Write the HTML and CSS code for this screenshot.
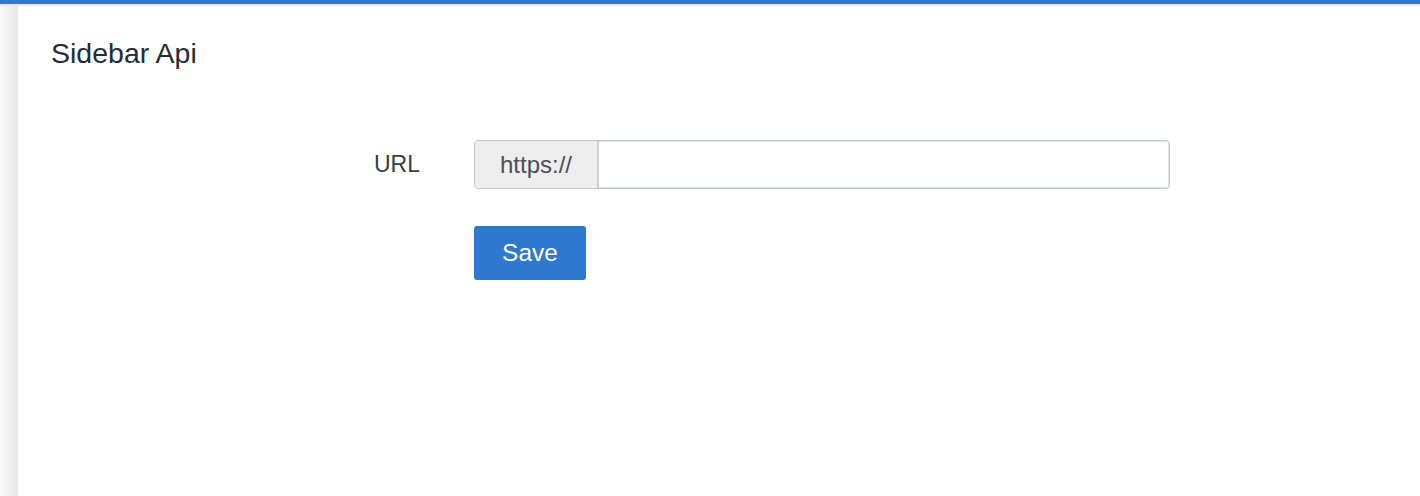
FILE: index.html
```html
<!DOCTYPE html>
<html lang="en">
<head>
    <meta charset="UTF-8">
    <meta name="viewport" content="width=device-width, initial-scale=1.0">
    <title>Sidebar Api</title>
    <link rel="stylesheet" href="styles.css">
</head>
<body>
    <div class="topbar"></div>
    <div class="layout">
        <div class="side-shadow"></div>
        <div class="panel">
            <h1 class="title">Sidebar Api</h1>
            <form class="api-form">
                <div class="form-row">
                    <label for="url" class="form-label">URL</label>
                    <div class="input-group">
                        <span class="addon">https://</span>
                        <input type="text" id="url" class="url-input">
                    </div>
                </div>
                <div class="form-row">
                    <div class="form-label"></div>
                    <button type="button" class="btn-save">Save</button>
                </div>
            </form>
        </div>
    </div>
</body>
</html>
```

FILE: styles.css
```css
body {
    font-family: "Liberation Sans", Arial, sans-serif;
    margin: 0;
    background-color: #fff;
    color: #252c34;
}
.topbar {
    height: 4px;
    background-color: #2f78d0;
    border-bottom: 2px solid #e7e8ea;
}
.layout {
    display: flex;
    height: 490px;
}
.side-shadow {
    width: 18px;
    background: linear-gradient(to right, #fbfbfb, #e6e6e6);
}
.panel {
    flex: 1;
    padding: 31px 33px;
    background: #fff;
}
.title {
    margin: 0;
    font-size: 28.5px;
    font-weight: normal;
    line-height: 32px;
    color: #252c34;
}
.api-form {
    margin-top: 71px;
}
.form-row {
    display: flex;
    align-items: center;
    margin-bottom: 37px;
}
.form-label {
    width: 423px;
    flex: none;
    box-sizing: border-box;
    padding-right: 54px;
    text-align: right;
    font-size: 23px;
    color: #333d48;
}
.input-group {
    display: flex;
    width: 696px;
    height: 49px;
    box-sizing: border-box;
    border: 1px solid #bec7d1;
    border-radius: 4px;
    box-shadow: inset 0 0 0 1px #dfe4ea;
    overflow: hidden;
}
.addon {
    width: 122px;
    display: flex;
    align-items: center;
    justify-content: center;
    background-color: #eeeeee;
    border-right: 2px solid #c8d0d9;
    font-size: 24px;
    color: #4a4f55;
}
.url-input {
    flex: 1;
    border: none;
    outline: none;
    background: transparent;
    padding: 0 12px;
    font-size: 22px;
    font-family: inherit;
}
.btn-save {
    width: 112px;
    height: 54px;
    border: none;
    border-radius: 3px;
    background-color: #2f78d0;
    color: #fff;
    font-family: inherit;
    font-size: 24.5px;
    cursor: pointer;
}
```
